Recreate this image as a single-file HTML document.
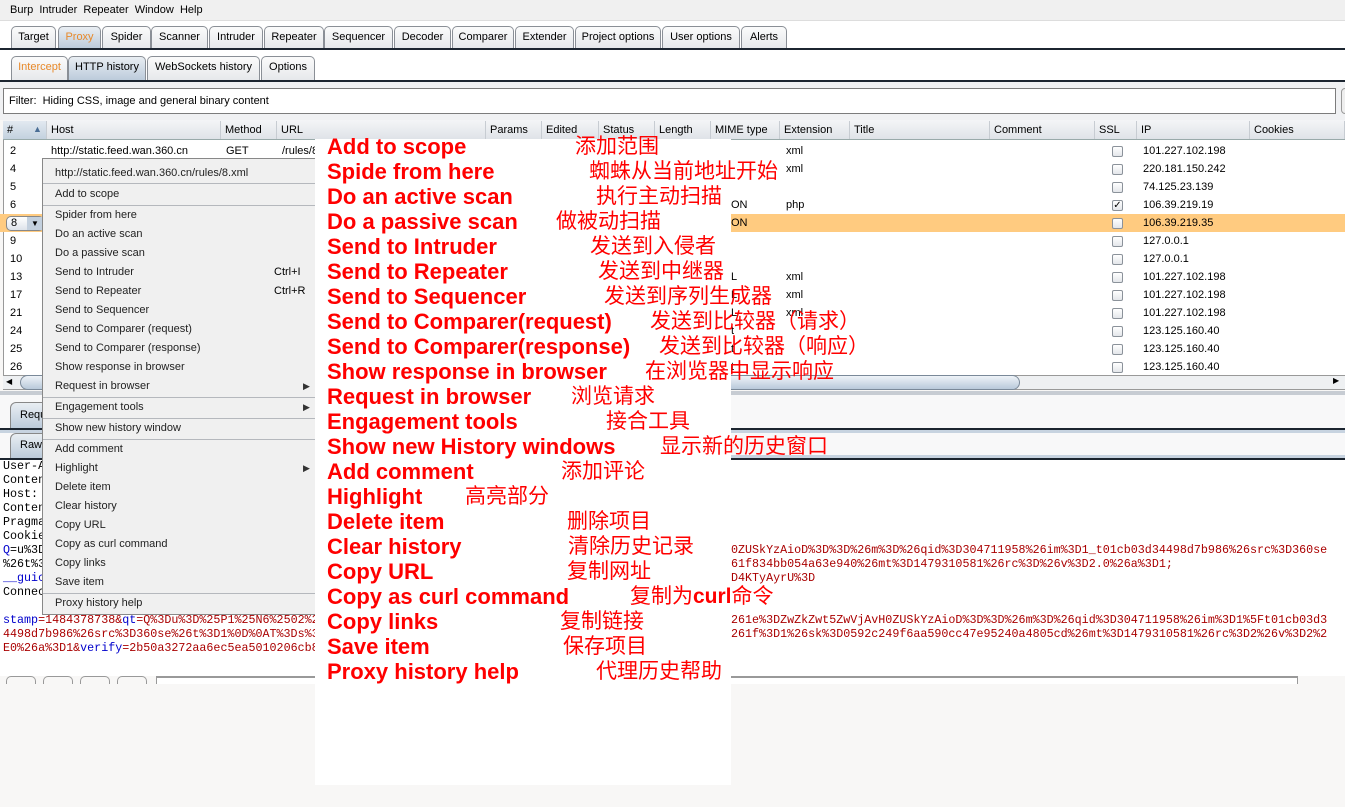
<!DOCTYPE html>
<html><head><meta charset="utf-8"><style>
*{box-sizing:border-box;margin:0;padding:0}
body{width:1345px;height:807px;overflow:hidden;background:#f8f7f6;font-family:"Liberation Sans",Arial,sans-serif;font-size:11px;color:#000;position:relative}
.a{position:absolute;white-space:nowrap}
.tab{position:absolute;top:26px;height:22px;border:1px solid #8a8f96;border-bottom:none;border-radius:5px 5px 0 0;background:linear-gradient(#fbfbfb,#e6e8eb);padding:4px 0 0;text-align:center;font-size:11px}
.tab.sel{background:linear-gradient(#e9eef3,#bccbdb);color:#e8892a}
.st{top:56px;height:24px}
.hd{position:absolute;top:121px;height:18px;border-right:1px solid #c7ccd2;padding:3px 4px;font-size:11px}
.cb{position:absolute;width:11px;height:11px;border:1px solid #8b929a;border-radius:2px;background:linear-gradient(#fff,#e3e6ea)}
.m{position:absolute;left:55px;font-size:11px;color:#222}
.sep{position:absolute;left:43px;width:272px;height:1px;background:#b5b8bd}
.arr{position:absolute;left:303px;font-size:9px;color:#333}
.en{position:absolute;left:327px;font-weight:bold;font-size:22px;color:#f00;font-family:"Liberation Sans",sans-serif}
.zh{position:absolute;font-size:21px;color:#f00;font-family:"Liberation Sans","Noto Sans CJK SC",sans-serif;line-height:24px}
.mono{position:absolute;font-family:"Liberation Mono",monospace;font-size:11.7px;color:#a00}
</style></head><body>
<div class="a" style="left:0;top:0;width:1345px;height:21px;background:#f0f0f0;border-bottom:1px solid #ddd"></div>
<div class="a" style="left:10px;top:4px;font-size:11px">Burp&nbsp; Intruder&nbsp; Repeater&nbsp; Window&nbsp; Help</div>
<div class="a" style="left:0;top:21px;width:1345px;height:60px;background:#fff"></div>
<div class="tab" style="left:11px;width:45px">Target</div>
<div class="tab sel" style="left:58px;width:43px">Proxy</div>
<div class="tab" style="left:102px;width:49px">Spider</div>
<div class="tab" style="left:151px;width:57px">Scanner</div>
<div class="tab" style="left:209px;width:54px">Intruder</div>
<div class="tab" style="left:264px;width:60px">Repeater</div>
<div class="tab" style="left:324px;width:69px">Sequencer</div>
<div class="tab" style="left:394px;width:57px">Decoder</div>
<div class="tab" style="left:452px;width:62px">Comparer</div>
<div class="tab" style="left:515px;width:59px">Extender</div>
<div class="tab" style="left:575px;width:86px">Project options</div>
<div class="tab" style="left:662px;width:78px">User options</div>
<div class="tab" style="left:741px;width:46px">Alerts</div>
<div class="a" style="left:0;top:48px;width:1345px;height:2px;background:#1c2530"></div>
<div class="tab st" style="left:11px;width:57px;color:#e8892a">Intercept</div>
<div class="tab st sel" style="left:68px;width:78px;color:#000">HTTP history</div>
<div class="tab st" style="left:147px;width:113px">WebSockets history</div>
<div class="tab st" style="left:261px;width:54px">Options</div>
<div class="a" style="left:0;top:80px;width:1345px;height:2px;background:#1c2530"></div>
<div class="a" style="left:0;top:82px;width:1345px;height:38px;background:#f0f1f3"></div>
<div class="a" style="left:3px;top:88px;width:1333px;height:26px;background:#fff;border:1px solid #7c7c7c"></div>
<div class="a" style="left:9px;top:95px">Filter:&nbsp; Hiding CSS, image and general binary content</div>
<div class="a" style="left:1341px;top:88px;width:10px;height:26px;border:1px solid #999;border-radius:4px;background:#eee"></div>
<div class="a" style="left:3px;top:120px;width:1342px;height:256px;background:#fff;border-left:1px solid #999"></div>
<div class="a" style="left:3px;top:120px;width:1342px;height:20px;background:linear-gradient(#f4f5f7,#dfe3e8);border-bottom:1px solid #9aa"></div>
<div class="hd" style="left:3px;width:44px;background:linear-gradient(#e2e9f1,#c3d1df)"># <span style="position:absolute;left:30px;color:#4a6d95;font-size:9px">▲</span></div>
<div class="hd" style="left:47px;width:174px">Host</div>
<div class="hd" style="left:221px;width:56px">Method</div>
<div class="hd" style="left:277px;width:209px">URL</div>
<div class="hd" style="left:486px;width:56px">Params</div>
<div class="hd" style="left:542px;width:57px">Edited</div>
<div class="hd" style="left:599px;width:56px">Status</div>
<div class="hd" style="left:655px;width:56px">Length</div>
<div class="hd" style="left:711px;width:69px">MIME type</div>
<div class="hd" style="left:780px;width:70px">Extension</div>
<div class="hd" style="left:850px;width:140px">Title</div>
<div class="hd" style="left:990px;width:105px">Comment</div>
<div class="hd" style="left:1095px;width:42px">SSL</div>
<div class="hd" style="left:1137px;width:113px">IP</div>
<div class="hd" style="left:1250px;width:95px">Cookies</div>
<div class="a" style="left:0;top:214px;width:1345px;height:18px;background:#ffcb80"></div>
<div class="a" style="left:6px;top:216px;width:38px;height:15px;border:1px solid #888;border-radius:5px;background:linear-gradient(#fff,#dde3ea);font-size:11px;padding-left:4px">8<span style="position:absolute;left:20px;top:0;width:16px;height:13px;background:#c3d0de;font-size:8px;text-align:center;line-height:13px">▼</span></div>
<div class="a" style="left:10px;top:142px;line-height:18px;font-size:11px">2<br>4<br>5<br>6<br>&nbsp;<br>9<br>10<br>13<br>17<br>21<br>24<br>25<br>26</div>
<div class="a" style="left:51px;top:142px;line-height:18px">http://static.feed.wan.360.cn</div>
<div class="a" style="left:226px;top:142px;line-height:18px">GET</div>
<div class="a" style="left:282px;top:142px;line-height:18px">/rules/8.x</div>
<div class="cb" style="left:510px;top:146px"></div>
<div class="cb" style="left:566px;top:146px"></div>
<div class="a" style="left:786px;top:142px;line-height:18px">xml<br>xml<br><br>php<br><br><br><br>xml<br>xml<br>xml</div>
<div class="a" style="left:731px;top:196px;line-height:18px">ON<br>ON<br><br><br>L<br>L<br>L<br>t<br>t<br>t</div>
<div class="cb" style="left:1112px;top:146px"></div><div class="cb" style="left:1112px;top:164px"></div><div class="cb" style="left:1112px;top:182px"></div>
<div class="cb" style="left:1112px;top:200px;font-size:10px;line-height:9px;text-align:center">✓</div>
<div class="cb" style="left:1112px;top:218px"></div><div class="cb" style="left:1112px;top:236px"></div><div class="cb" style="left:1112px;top:254px"></div><div class="cb" style="left:1112px;top:272px"></div><div class="cb" style="left:1112px;top:290px"></div><div class="cb" style="left:1112px;top:308px"></div><div class="cb" style="left:1112px;top:326px"></div><div class="cb" style="left:1112px;top:344px"></div><div class="cb" style="left:1112px;top:362px"></div>
<div class="a" style="left:1143px;top:142px;line-height:18px">101.227.102.198<br>220.181.150.242<br>74.125.23.139<br>106.39.219.19<br>106.39.219.35<br>127.0.0.1<br>127.0.0.1<br>101.227.102.198<br>101.227.102.198<br>101.227.102.198<br>123.125.160.40<br>123.125.160.40<br>123.125.160.40</div>
<div class="a" style="left:3px;top:375px;width:1342px;height:15px;background:#eef0f2;border-top:1px solid #999;border-bottom:1px solid #999"></div>
<div class="a" style="left:20px;top:375px;width:1000px;height:15px;border:1px solid #7a8999;border-radius:8px;background:linear-gradient(#eef3f8,#b9c9da)"></div>
<div class="a" style="left:1333px;top:376px;font-size:8px">▶</div>
<div class="a" style="left:6px;top:377px;font-size:8px">◀</div>
<div class="a" style="left:0;top:391px;width:1345px;height:290px;background:#fff"></div>
<div class="a" style="left:0;top:391px;width:1345px;height:4px;background:#c7ccd3"></div>
<div class="a" style="left:0;top:395px;width:1345px;height:33px;background:#f8f8f9"></div>
<div class="a" style="left:10px;top:402px;width:40px;height:26px;border:1px solid #888;border-bottom:none;border-radius:6px 6px 0 0;background:linear-gradient(#e9eef3,#bccbdb);padding:6px 0 0 9px">Requ</div>
<div class="a" style="left:0;top:428px;width:1345px;height:2px;background:#1c2530"></div>
<div class="a" style="left:0;top:430px;width:1345px;height:3px;background:#c7d3e0"></div>
<div class="a" style="left:0;top:433px;width:1345px;height:25px;background:#f8f8f9"></div>
<div class="a" style="left:10px;top:433px;width:40px;height:25px;border:1px solid #888;border-bottom:none;border-radius:6px 6px 0 0;background:linear-gradient(#e9eef3,#bccbdb);padding:5px 0 0 9px">Raw</div>
<div class="a" style="left:0;top:458px;width:1345px;height:2px;background:#1c2530"></div>
<div class="a" style="left:731px;top:455px;width:614px;height:3px;background:#c7d3e0"></div>
<div class="mono" style="left:3px;top:459px;line-height:14px;color:#000">User-A<br>Conten<br>Host: <br>Conten<br>Pragma<br>Cookie<br><span style="color:#00c">Q</span>=u%3D<br>%26t%3<br><span style="color:#00c">__guic</span><br>Connec</div>
<div class="mono" style="left:3px;top:613px;line-height:14px"><span style="color:#00c">stamp</span>=1484378738&amp;<span style="color:#00c">qt</span>=Q%3Du%3D%25P1%25N6%2502%2<br>4498d7b986%26src%3D360se%26t%3D1%0D%0AT%3Ds%3<br>E0%26a%3D1&amp;<span style="color:#00c">verify</span>=2b50a3272aa6ec5ea5010206cb8</div>
<div class="mono" style="left:731px;top:543px;line-height:14px">0ZUSkYzAioD%3D%3D%26m%3D%26qid%3D304711958%26im%3D1_t01cb03d34498d7b986%26src%3D360se<br>61f834bb054a63e940%26mt%3D1479310581%26rc%3D%26v%3D2.0%26a%3D1;<br>D4KTyAyrU%3D</div>
<div class="mono" style="left:731px;top:613px;line-height:14px">261e%3DZwZkZwt5ZwVjAvH0ZUSkYzAioD%3D%3D%26m%3D%26qid%3D304711958%26im%3D1%5Ft01cb03d3<br>261f%3D1%26sk%3D0592c249f6aa590cc47e95240a4805cd%26mt%3D1479310581%26rc%3D2%26v%3D2%2</div>
<div class="a" style="left:0;top:676px;width:1345px;height:131px;background:#f8f7f6"></div>
<div class="a" style="left:6px;top:676px;width:30px;height:8px;border:1px solid #999;border-bottom:none;border-radius:5px 5px 0 0"></div>
<div class="a" style="left:43px;top:676px;width:30px;height:8px;border:1px solid #999;border-bottom:none;border-radius:5px 5px 0 0"></div>
<div class="a" style="left:80px;top:676px;width:30px;height:8px;border:1px solid #999;border-bottom:none;border-radius:5px 5px 0 0"></div>
<div class="a" style="left:117px;top:676px;width:30px;height:8px;border:1px solid #999;border-bottom:none;border-radius:5px 5px 0 0"></div>
<div class="a" style="left:156px;top:676px;width:1142px;height:8px;border-top:2px solid #999;border-left:1px solid #999;border-right:1px solid #999;background:#fff"></div>
<div class="a" style="left:42px;top:158px;width:290px;height:457px;background:#f0f0f0;border:1px solid #888"></div>
<div class="m" style="top:167px">http://static.feed.wan.360.cn/rules/8.xml</div>
<div class="sep" style="top:183px"></div>
<div class="m" style="top:188px">Add to scope</div>
<div class="sep" style="top:205px"></div>
<div class="m" style="top:209px">Spider from here</div>
<div class="m" style="top:228px">Do an active scan</div>
<div class="m" style="top:247px">Do a passive scan</div>
<div class="m" style="top:266px">Send to Intruder</div><div class="a" style="left:274px;top:266px">Ctrl+I</div>
<div class="m" style="top:285px">Send to Repeater</div><div class="a" style="left:274px;top:285px">Ctrl+R</div>
<div class="m" style="top:304px">Send to Sequencer</div>
<div class="m" style="top:323px">Send to Comparer (request)</div>
<div class="m" style="top:342px">Send to Comparer (response)</div>
<div class="m" style="top:361px">Show response in browser</div>
<div class="m" style="top:380px">Request in browser</div><div class="arr" style="top:381px">▶</div>
<div class="sep" style="top:397px"></div>
<div class="m" style="top:401px">Engagement tools</div><div class="arr" style="top:402px">▶</div>
<div class="sep" style="top:418px"></div>
<div class="m" style="top:422px">Show new history window</div>
<div class="sep" style="top:439px"></div>
<div class="m" style="top:443px">Add comment</div>
<div class="m" style="top:462px">Highlight</div><div class="arr" style="top:463px">▶</div>
<div class="m" style="top:481px">Delete item</div>
<div class="m" style="top:500px">Clear history</div>
<div class="m" style="top:519px">Copy URL</div>
<div class="m" style="top:538px">Copy as curl command</div>
<div class="m" style="top:557px">Copy links</div>
<div class="m" style="top:576px">Save item</div>
<div class="sep" style="top:593px"></div>
<div class="m" style="top:597px">Proxy history help</div>
<div class="a" style="left:315px;top:139px;width:416px;height:646px;background:#fff"></div>
<div class="en" style="top:134px">Add to scope</div>
<div class="en" style="top:159px">Spide from here</div>
<div class="en" style="top:184px">Do an active scan</div>
<div class="en" style="top:209px">Do a passive scan</div>
<div class="en" style="top:234px">Send to Intruder</div>
<div class="en" style="top:259px">Send to Repeater</div>
<div class="en" style="top:284px">Send to Sequencer</div>
<div class="en" style="top:309px">Send to Comparer(request)</div>
<div class="en" style="top:334px">Send to Comparer(response)</div>
<div class="en" style="top:359px">Show response in browser</div>
<div class="en" style="top:384px">Request in browser</div>
<div class="en" style="top:409px">Engagement tools</div>
<div class="en" style="top:434px">Show new History windows</div>
<div class="en" style="top:459px">Add comment</div>
<div class="en" style="top:484px">Highlight</div>
<div class="en" style="top:509px">Delete item</div>
<div class="en" style="top:534px">Clear history</div>
<div class="en" style="top:559px">Copy URL</div>
<div class="en" style="top:584px">Copy as curl command</div>
<div class="en" style="top:609px">Copy links</div>
<div class="en" style="top:634px">Save item</div>
<div class="en" style="top:659px">Proxy history help</div>
<div class="zh" style="left:575px;top:135px">添加范围</div>
<div class="zh" style="left:589px;top:160px">蜘蛛从当前地址开始</div>
<div class="zh" style="left:596px;top:185px">执行主动扫描</div>
<div class="zh" style="left:556px;top:210px">做被动扫描</div>
<div class="zh" style="left:590px;top:235px">发送到入侵者</div>
<div class="zh" style="left:598px;top:260px">发送到中继器</div>
<div class="zh" style="left:604px;top:285px">发送到序列生成器</div>
<div class="zh" style="left:650px;top:310px">发送到比较器（请求）</div>
<div class="zh" style="left:659px;top:335px">发送到比较器（响应）</div>
<div class="zh" style="left:645px;top:360px">在浏览器中显示响应</div>
<div class="zh" style="left:571px;top:385px">浏览请求</div>
<div class="zh" style="left:606px;top:410px">接合工具</div>
<div class="zh" style="left:660px;top:435px">显示新的历史窗口</div>
<div class="zh" style="left:561px;top:460px">添加评论</div>
<div class="zh" style="left:465px;top:485px">高亮部分</div>
<div class="zh" style="left:567px;top:510px">删除项目</div>
<div class="zh" style="left:568px;top:535px">清除历史记录</div>
<div class="zh" style="left:567px;top:560px">复制网址</div>
<div class="zh" style="left:630px;top:585px">复制为<b>curl</b>命令</div>
<div class="zh" style="left:560px;top:610px">复制链接</div>
<div class="zh" style="left:563px;top:635px">保存项目</div>
<div class="zh" style="left:596px;top:660px">代理历史帮助</div>
</body></html>
